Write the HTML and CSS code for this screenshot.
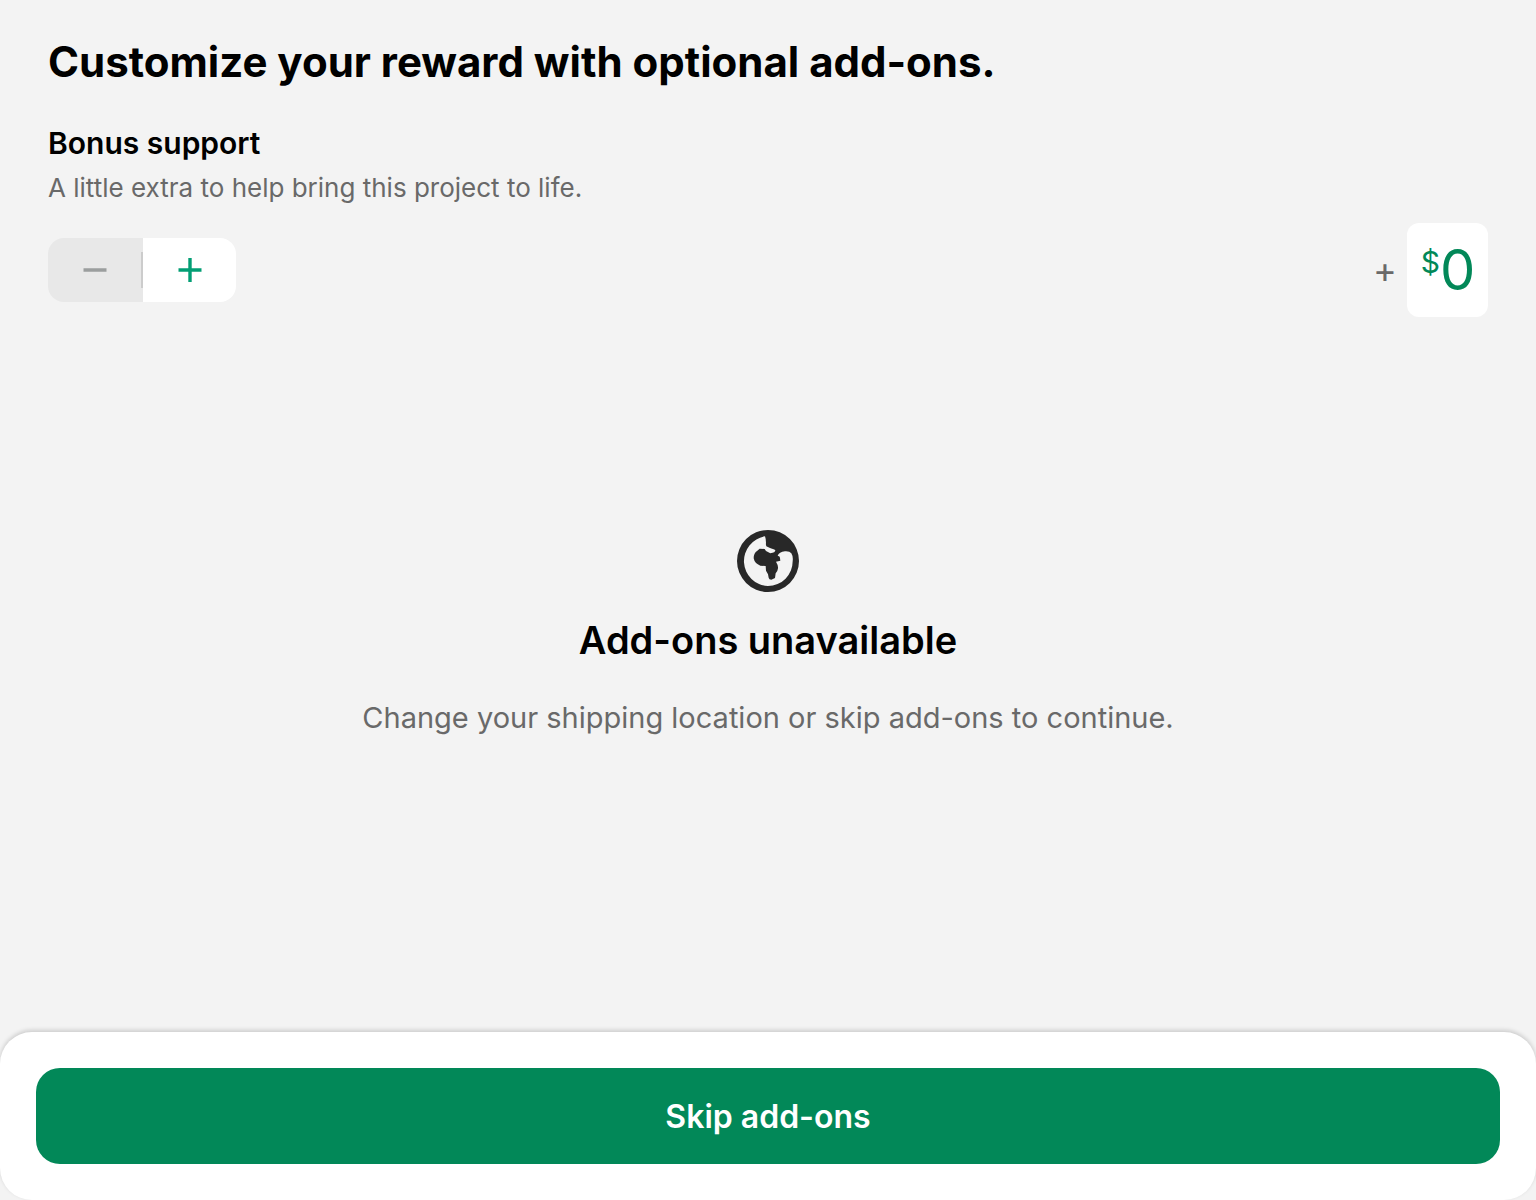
FILE: index.html
```html
<!DOCTYPE html>
<html lang="en">
<head>
<meta charset="utf-8">
<meta name="viewport" content="width=device-width, initial-scale=1">
<title>Add-ons</title>
<link rel="stylesheet" href="styles.css">
</head>
<body>
<main class="content">
  <h1 class="title">Customize your reward with optional add-ons.</h1>
  <section class="bonus">
    <h2 class="bonus-title">Bonus support</h2>
    <p class="bonus-text">A little extra to help bring this project to life.</p>
    <div class="bonus-row">
      <div class="stepper">
        <button class="step step-minus" type="button" aria-label="Decrease" disabled>
          <svg width="24" height="24" viewBox="0 0 24 24" aria-hidden="true"><path d="M.5 12h23" stroke="currentColor" stroke-width="3.4"/></svg>
        </button>
        <button class="step step-plus" type="button" aria-label="Increase">
          <svg width="24" height="24" viewBox="0 0 24 24" aria-hidden="true"><path d="M.5 12h23M12 0v24" stroke="currentColor" stroke-width="3.4"/></svg>
        </button>
      </div>
      <div class="amount">
        <span class="amount-plus">+</span>
        <label class="amount-box">
          <span class="currency">$</span>
          <input class="amount-input" type="text" inputmode="numeric" value="0" aria-label="Bonus amount">
        </label>
      </div>
    </div>
  </section>
  <section class="empty">
    <svg class="globe" viewBox="51 44 186 186" aria-hidden="true">
      <path fill="currentColor" fill-rule="evenodd" d="M144 44a93 93 0 1 0 0 186a93 93 0 1 0 0-186ZM135 63A75 75 0 0 0 144 212A74 74 0 0 0 218 137Q220 124 214 114Q209 107 195 108Q177 110 173 121Q181 123 180 129L181 136L168 139Q175 150 174 159Q173 169 167 174L165 188L154 193Q147 193 146 187L144 177L138 166L137 152L121 151Q104 145 101 129Q101 112 112 106L119 100L134 101L138 107L151 114Q166 112 166 105Q164 102 150 98L139 93Q137 88 138 83Q138 71 135 63Z"/>
    </svg>
    <h2 class="empty-title">Add-ons unavailable</h2>
    <p class="empty-text">Change your shipping location or skip add-ons to continue.</p>
  </section>
</main>
<footer class="footer">
  <button class="skip" type="button">Skip add-ons</button>
</footer>
</body>
</html>
```
FILE: styles.css
```css
* {
  box-sizing: border-box;
}

body {
  margin: 0;
  min-height: 100vh;
  display: flex;
  flex-direction: column;
  background: #f3f3f3;
  color: #000;
  font-family: Inter, "Liberation Sans", sans-serif;
}

h1, h2, p {
  margin: 0;
}

button, input {
  font: inherit;
  border: 0;
  padding: 0;
}

.content {
  flex: 1;
  display: flex;
  flex-direction: column;
  padding: 36px 48px 0;
}

.title {
  font-size: 42px;
  line-height: 52px;
  font-weight: 700;
}

.bonus {
  padding-top: 36px;
}

.bonus-title {
  font-size: 30px;
  line-height: 38px;
  font-weight: 600;
}

.bonus-text {
  padding-top: 8px;
  font-size: 26px;
  line-height: 36px;
  color: #696969;
}

.bonus-row {
  display: flex;
  justify-content: space-between;
  align-items: center;
  padding-top: 17px;
}

.stepper {
  display: flex;
  width: 188px;
  height: 64px;
  border-radius: 16px;
  overflow: hidden;
}

.step {
  flex: 1;
  display: flex;
  align-items: center;
  justify-content: center;
}

.step-minus {
  flex: 0 0 95px;
  padding-right: 2px;
  background: linear-gradient(#ccc, #ccc) right center / 2px 36px no-repeat, #e8e8e8;
  color: #9b9e9e;
}

.step-plus {
  background: #fff;
  color: #039e74;
}

.amount {
  display: flex;
  align-items: center;
  gap: 10px;
}

.amount-plus {
  font-size: 36px;
  line-height: 40px;
  color: #696969;
}

.amount-box {
  display: flex;
  align-items: center;
  height: 94px;
  padding: 0 14px;
  border-radius: 12px;
  background: #fff;
  color: #028858;
}

.currency {
  padding-bottom: 16px;
  font-size: 30px;
  line-height: 36px;
}

.amount-input {
  width: 34px;
  height: 64px;
  background: transparent;
  color: inherit;
  font-size: 56px;
  text-align: center;
}

.empty {
  flex: 1;
  display: flex;
  flex-direction: column;
  align-items: center;
  justify-content: center;
  padding-bottom: 84px;
  text-align: center;
}

.globe {
  width: 62px;
  height: 62px;
  color: #282828;
}

.empty-title {
  padding-top: 24px;
  font-size: 38px;
  line-height: 48px;
  font-weight: 600;
}

.empty-text {
  padding-top: 36px;
  font-size: 29px;
  line-height: 36px;
  color: #696969;
}

.footer {
  padding: 36px;
  border-radius: 32px;
  background: #fff;
  box-shadow: 0 -2px 4px rgba(0, 0, 0, 0.16);
}

.skip {
  display: block;
  width: 100%;
  height: 96px;
  border-radius: 24px;
  background: #028858;
  color: #fff;
  font-size: 32px;
  font-weight: 600;
}
```
